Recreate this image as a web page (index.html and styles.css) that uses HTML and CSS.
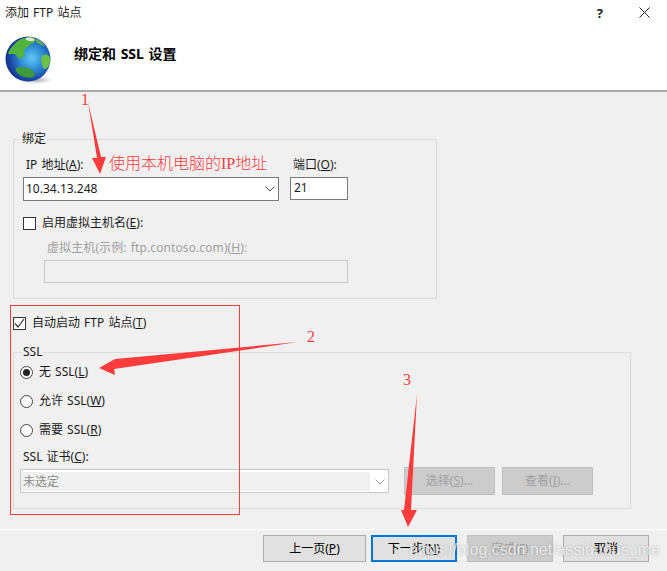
FILE: index.html
```html
<!DOCTYPE html>
<html lang="zh-CN">
<head>
    <meta charset="UTF-8">
    <meta name="viewport" content="width=device-width, initial-scale=1.0">
    <title>添加 FTP 站点</title>
    <link rel="stylesheet" href="styles.css">
</head>
<body>
    <div class="dialog">
        <div class="titlebar">
            <span class="title">添加 FTP 站点</span>
            <span class="help">?</span>
            <svg class="close" width="11" height="11" viewBox="0 0 11 11">
                <path d="M0.5 0.5 L10.5 10.5 M10.5 0.5 L0.5 10.5" stroke="#222" stroke-width="1" fill="none"/>
            </svg>
        </div>

        <header class="banner">
            <svg class="globe" width="48" height="50" viewBox="0 0 48 50">
                <defs>
                    <radialGradient id="sea" cx="58%" cy="48%" r="60%">
                        <stop offset="0" stop-color="#62c8f2"/>
                        <stop offset="0.45" stop-color="#2b8ad4"/>
                        <stop offset="0.85" stop-color="#173f9c"/>
                        <stop offset="1" stop-color="#122f78"/>
                    </radialGradient>
                    <radialGradient id="shade" cx="50%" cy="50%" r="50%">
                        <stop offset="0" stop-color="#777" stop-opacity="0.7"/>
                        <stop offset="1" stop-color="#999" stop-opacity="0"/>
                    </radialGradient>
                </defs>
                <ellipse cx="30" cy="45" rx="18" ry="4" fill="url(#shade)"/>
                <circle cx="23" cy="24" r="22.5" fill="url(#sea)"/>
                <path d="M9 10 C13 4 20 2 27 2 C31 3 32 6 28 8 C24 9 24 12 20 14 C18 17 21 20 17 23 C15 26 13 22 11 20 C9 18 6 20 3 19 C4 15 6 12 9 10 Z" fill="#54b33c"/>
                <path d="M21 3 C25 2 29 3 30 5 C27 7 24 6 21 5 Z" fill="#d8e8d0"/>
                <path d="M31 4 C35 5 38 8 40 11 C37 11 34 9 31 7 Z" fill="#5dae5a"/>
                <path d="M37 21 C41 18 44 20 45 23 C46 29 42 35 39 34 C37 31 35 25 37 21 Z" fill="#6cc048"/>
                <path d="M11 33 C15 31 21 32 25 34 C29 36 31 39 29 41 C24 44 18 42 15 40 C12 38 10 35 11 33 Z" fill="#3f9a3a"/>
            </svg>
            <h1>绑定和 SSL 设置</h1>
        </header>

        <main class="content">
            <fieldset class="group binding">
                <legend>绑定</legend>
                <div class="ip-row">
                    <div class="field">
                        <label>IP 地址(<u>A</u>):</label>
                        <div class="combo ip-combo">
                            <span>10.34.13.248</span>
                            <svg class="chevron" width="10" height="6" viewBox="0 0 10 6"><path d="M0.5 0.5 L5 5 L9.5 0.5" stroke="#555" fill="none"/></svg>
                        </div>
                    </div>
                    <div class="field">
                        <label>端口(<u>O</u>):</label>
                        <div class="textbox port">21</div>
                    </div>
                </div>
                <div class="check-row host-check">
                    <span class="checkbox"></span>
                    <span>启用虚拟主机名(<u>E</u>):</span>
                </div>
                <div class="host-field">
                    <label class="disabled">虚拟主机(示例: ftp.contoso.com)(<u>H</u>):</label>
                    <div class="textbox host"></div>
                </div>
            </fieldset>

            <div class="check-row auto-start">
                <span class="checkbox">
                    <svg width="11" height="11" viewBox="0 0 11 11"><path d="M1 5.5 L4 9 L10 1" stroke="#333" stroke-width="1.2" fill="none"/></svg>
                </span>
                <span>自动启动 FTP 站点(<u>T</u>)</span>
            </div>

            <fieldset class="group ssl">
                <legend>SSL</legend>
                <div class="radio-row"><span class="radio on"></span><span>无 SSL(<u>L</u>)</span></div>
                <div class="radio-row"><span class="radio"></span><span>允许 SSL(<u>W</u>)</span></div>
                <div class="radio-row"><span class="radio"></span><span>需要 SSL(<u>R</u>)</span></div>
                <label class="cert-label">SSL 证书(<u>C</u>):</label>
                <div class="cert-row">
                    <div class="combo cert-combo">
                        <span class="cert-value">未选定</span>
                        <svg class="chevron" width="10" height="6" viewBox="0 0 10 6"><path d="M0.5 0.5 L5 5 L9.5 0.5" stroke="#a0a0a0" fill="none"/></svg>
                    </div>
                    <button class="btn small" disabled>选择(<u>S</u>)...</button>
                    <button class="btn small" disabled>查看(<u>I</u>)...</button>
                </div>
            </fieldset>
        </main>

        <footer class="actions">
            <button class="btn prev">上一页(<u>P</u>)</button>
            <button class="btn next">下一步(<u>N</u>)</button>
            <button class="btn finish" disabled>完成(<u>F</u>)</button>
            <button class="btn">取消</button>
        </footer>
    </div>

    <!-- hand-drawn notes on top of the screenshot -->
    <div class="red-box"></div>
    <svg class="arrows" width="667" height="571" viewBox="0 0 667 571">
        <path d="M88 102 L97 158 L92 158 L100 174 L106 157 L101 157 Z" fill="#ff3b3b"/>
        <path d="M298 342 L115 359 L99 368 L115 375 L114 369 Z" fill="#ff3b3b"/>
        <path d="M417 394 L404 510 L401 510 L408 527 L417 510 L411 510 Z" fill="#ff3b3b"/>
    </svg>
    <span class="note note-1">1</span>
    <span class="note note-2">2</span>
    <span class="note note-3">3</span>
    <span class="note note-ip">使用本机电脑的IP地址</span>
    <span class="watermark">https://blog.csdn.net/assiduous_me</span>
</body>
</html>
```

FILE: styles.css
```css
/* Global */
body {
    margin: 0;
    width: 667px;
    height: 571px;
    overflow: hidden;
    position: relative;
    font-family: "Noto Sans", "Noto Sans CJK SC", sans-serif;
    font-size: 12px;
    line-height: 16px;
    word-spacing: 1px;
    color: #1a1a1a;
    background-color: #f0f0f0;
}

.dialog {
    display: flex;
    flex-direction: column;
    height: 571px;
}

/* Title bar */
.titlebar {
    display: flex;
    align-items: center;
    height: 25px;
    padding: 0 17px 0 5px;
    background-color: #fff;
}

.title {
    flex: 1;
}

.help {
    margin-right: 36px;
    font-weight: bold;
    font-size: 13px;
}

/* Banner */
.banner {
    display: flex;
    align-items: flex-start;
    height: 65px;
    padding-left: 5px;
    background-color: #fff;
    border-bottom: 2px solid #a8a8a8;
}

.globe {
    margin-top: 10px;
}

.banner h1 {
    margin: 20px 0 0 21px;
    font-size: 14px;
    line-height: 18px;
    font-weight: bold;
    color: #000;
}

/* Content */
.content {
    flex: 1;
    padding: 39px 36px 0 13px;
}

.group {
    margin: 0;
    padding: 0;
    border: 1px solid #dcdcdc;
}

.group legend {
    padding: 0 1px;
}

.binding {
    width: 424px;
    height: 168px;
    box-sizing: border-box;
    padding: 10px 0 0 9px;
}

.binding legend {
    margin-left: -2px;
}

.ip-row {
    display: flex;
    gap: 11px;
}

.field label {
    display: block;
    margin-left: 3px;
    margin-bottom: 4px;
}

.combo {
    display: flex;
    align-items: center;
    justify-content: space-between;
    box-sizing: border-box;
    background-color: #fff;
    border: 1px solid #7a7a7a;
}

.ip-combo {
    width: 256px;
    height: 24px;
    padding: 0 3px 0 2px;
}

.textbox {
    box-sizing: border-box;
    background-color: #fff;
    border: 1px solid #7a7a7a;
}

.port {
    width: 58px;
    height: 23px;
    padding: 2px 3px;
}

.check-row {
    display: flex;
    align-items: center;
    gap: 6px;
}

.checkbox {
    display: flex;
    align-items: center;
    justify-content: center;
    box-sizing: border-box;
    width: 13px;
    height: 13px;
    background-color: #fff;
    border: 1px solid #333;
}

.host-check {
    margin-top: 14px;
}

.host-field {
    margin: 9px 0 0 21px;
}

.host-field label {
    display: block;
    margin: 0 0 4px 3px;
    letter-spacing: 0.1px;
    white-space: nowrap;
}

.disabled {
    color: #a0a0a0;
}

.host {
    width: 304px;
    height: 23px;
    background-color: #f0f0f0;
    border-color: #c8c8c8;
}

.auto-start {
    margin-top: 16px;
}

.ssl {
    width: 618px;
    height: 165px;
    box-sizing: border-box;
    margin-top: 13px;
    padding: 4px 0 0 6px;
}

.ssl legend {
    margin-left: 2px;
}

.radio-row {
    display: flex;
    align-items: center;
    gap: 6px;
    height: 16px;
    margin-bottom: 13px;
}

.radio {
    display: flex;
    align-items: center;
    justify-content: center;
    box-sizing: border-box;
    width: 13px;
    height: 13px;
    border-radius: 50%;
    background-color: #fff;
    border: 1px solid #444;
}

.radio.on::after {
    content: "";
    width: 7px;
    height: 7px;
    border-radius: 50%;
    background-color: #222;
}

.cert-label {
    display: block;
    margin: -2px 0 4px 3px;
}

.cert-row {
    display: flex;
    align-items: flex-start;
    gap: 7px;
}

.cert-combo {
    width: 369px;
    height: 24px;
    margin-right: 8px;
    border-color: #c8c8c8;
    padding: 2px 3px 1px 0;
}

.cert-value {
    flex: 1;
    height: 19px;
    margin-right: 5px;
    padding-left: 2px;
    line-height: 19px;
    color: #8a8a8a;
    background-color: #f0f0f0;
}

/* Buttons */
.btn {
    box-sizing: border-box;
    width: 86px;
    height: 27px;
    padding: 0;
    font: inherit;
    word-spacing: inherit;
    color: #000;
    background-color: #e1e1e1;
    border: 1px solid #adadad;
}

.btn:disabled {
    color: #a0a0a0;
    background-color: #ccc;
    border-color: #bfbfbf;
}

.btn.small {
    width: 91px;
    height: 28px;
    margin-top: -2px;
}

.actions {
    display: flex;
    justify-content: flex-end;
    box-sizing: border-box;
    height: 42px;
    padding: 5px 18px 0 0;
    border-top: 1px solid #fff;
}

.prev {
    width: 103px;
    margin-right: 5px;
}

.next {
    border: 2px solid #0078d7;
    margin-right: 10px;
}

.finish {
    margin-right: 10px;
}

/* Annotations */
.red-box {
    position: absolute;
    left: 10px;
    top: 305px;
    width: 228px;
    height: 208px;
    border: 1px solid #f04040;
}

.arrows {
    position: absolute;
    left: 0;
    top: 0;
}

.note {
    position: absolute;
    font-family: "Liberation Serif", "Noto Sans CJK SC", serif;
    color: #f43c3c;
    font-size: 16px;
    line-height: 18px;
    font-weight: 300;
}

.note-1 { left: 81px; top: 91px; }
.note-2 { left: 307px; top: 328px; }
.note-3 { left: 403px; top: 371px; }

.note-ip {
    left: 109px;
    top: 155px;
    white-space: nowrap;
}

.watermark {
    position: absolute;
    left: 409px;
    top: 541px;
    font-family: "Liberation Sans", sans-serif;
    font-size: 16px;
    line-height: 18px;
    white-space: nowrap;
    word-spacing: 0;
    color: rgba(255, 255, 255, 0.75);
    text-shadow: 0 0 2px rgba(90, 90, 90, 0.45);
}
```
